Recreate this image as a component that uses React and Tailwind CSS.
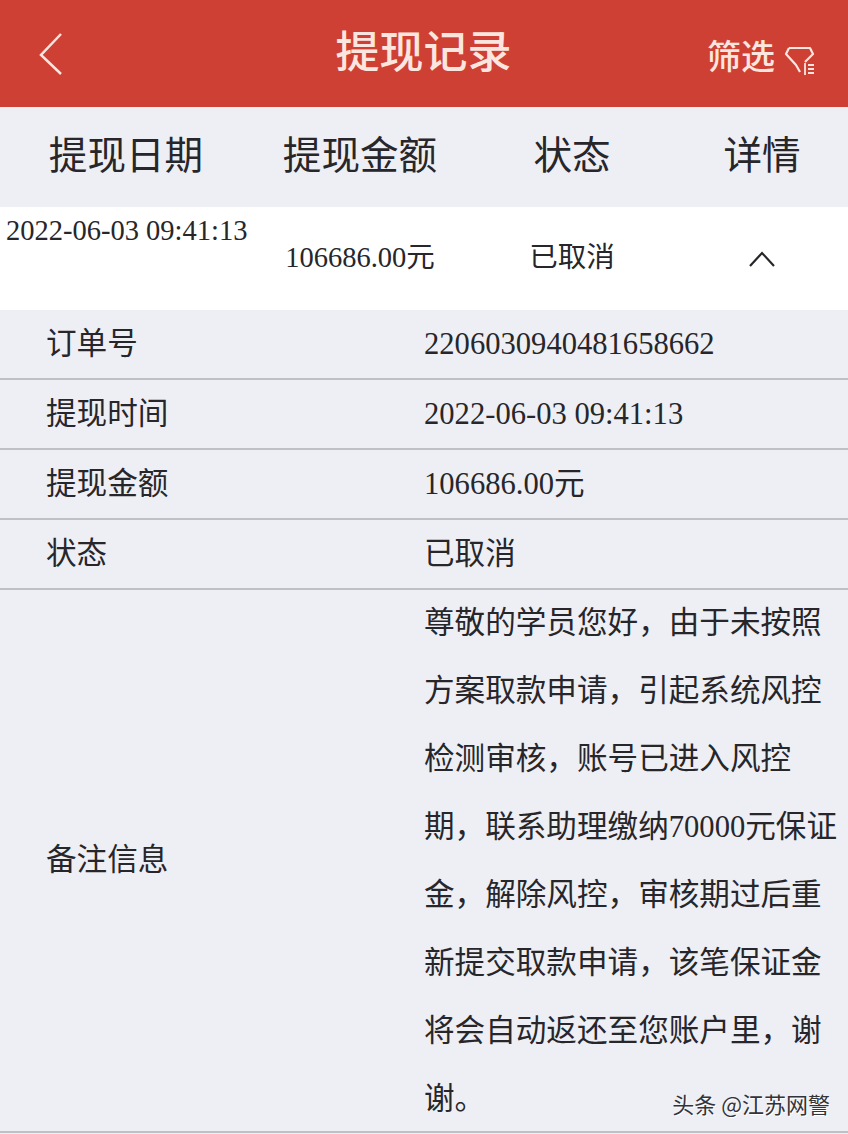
const rows = [
  ["订单号", "2206030940481658662"],
  ["提现时间", "2022-06-03 09:41:13"],
  ["提现金额", "106686.00元"],
  ["状态", "已取消"],
];

const remark = [
  "尊敬的学员您好，由于未按照",
  "方案取款申请，引起系统风控",
  "检测审核，账号已进入风控",
  "期，联系助理缴纳70000元保证",
  "金，解除风控，审核期过后重",
  "新提交取款申请，该笔保证金",
  "将会自动返还至您账户里，谢",
  "谢。",
];

const font = "font-['Liberation_Serif','Noto_Sans_CJK_SC',sans-serif]";

export default function App() {
  return (
    <div className={`relative w-[848px] h-[1134px] overflow-hidden bg-[#eeeff4] text-[#26262b] ${font}`}>
      <header className="h-[107px] bg-[#cf4034] flex items-center justify-between pl-[38px] pr-[32px] text-[#fbe6df]">
        <svg width="26" height="44" viewBox="0 0 26 44" fill="none" stroke="currentColor" strokeWidth="2.5">
          <path d="M23 2 L3 23 L23 42" />
        </svg>
        <h1 className="absolute left-0 right-0 text-center text-[44px] leading-none pr-[1px] font-medium">提现记录</h1>
        <div className="relative flex items-center gap-[9px] mt-[8px]">
          <span className="text-[34px] leading-none font-medium">筛选</span>
          <svg width="32" height="32" viewBox="0 0 32 32" fill="none" stroke="currentColor" strokeWidth="2.2" className="mt-[6px]">
            <path d="M5 3 H26 L29 9 L21 17 M5 3 L2 9 L12 20 L16 27" strokeLinejoin="round" />
            <path d="M21 18 V30 M24 20 H30 M24 24 H30 M24 28 H30" strokeWidth="1.8" />
          </svg>
        </div>
      </header>

      <div className="h-[100px] grid grid-cols-[252px_216px_208px_172px] items-center text-center text-[38.6px]">
        <span>提现日期</span>
        <span>提现金额</span>
        <span>状态</span>
        <span>详情</span>
      </div>

      <div className="h-[103px] bg-white grid grid-cols-[252px_216px_208px_172px] items-center text-center text-[28.5px]">
        <span className="self-start pt-[6px] pl-[6px] text-left whitespace-nowrap leading-[36px]">2022-06-03 09:41:13</span>
        <span className="whitespace-nowrap">106686.00元</span>
        <span>已取消</span>
        <span className="flex justify-center">
          <svg width="26" height="16" viewBox="0 0 26 16" fill="none" stroke="currentColor" strokeWidth="2.2">
            <path d="M1 15 L13 2 L25 15" />
          </svg>
        </span>
      </div>

      {rows.map(([label, value]) => (
        <div key={label} className="h-[70px] flex items-center border-b-2 border-[#bfc0c6] text-[30.6px] pt-[2px]">
          <span className="w-[424px] pl-[46px]">{label}</span>
          <span className="whitespace-nowrap">{value}</span>
        </div>
      ))}

      <div className="h-[543px] flex items-center border-b-2 border-[#bfc0c6]">
        <span className="w-[424px] pl-[46px] text-[30.6px]">备注信息</span>
        <div className="text-[30.6px] leading-[68px] whitespace-nowrap">
          {remark.map((line) => (
            <div key={line}>{line}</div>
          ))}
        </div>
      </div>

      <span className="absolute right-[18px] bottom-[14px] text-[22px] text-[#33343a] [text-shadow:1px_1px_0_#fff] font-['Noto_Sans_CJK_SC',sans-serif]">头条 @江苏网警</span>
    </div>
  );
}
